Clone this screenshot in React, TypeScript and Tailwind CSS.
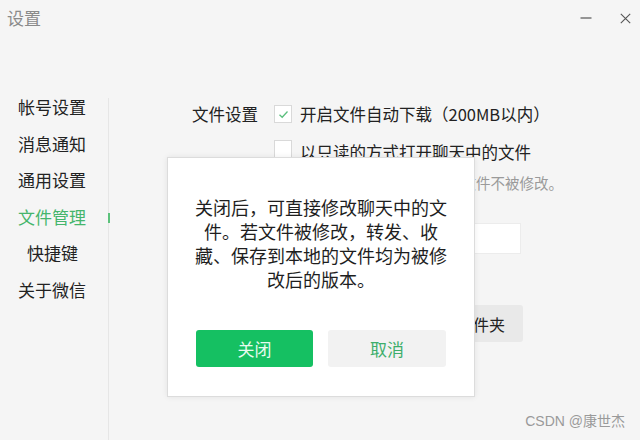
import React from "react";

const font = { fontFamily: '"Noto Sans CJK SC", "Microsoft YaHei", sans-serif' };

function Check({ checked }: { checked?: boolean }) {
  return (
    <div className="w-[18px] h-[18px] border border-[#d9d9d9] bg-white flex items-center justify-center shrink-0">
      {checked && (
        <svg width="11" height="9" viewBox="0 0 11 9">
          <path d="M1.5 4.8 L4.2 7.3 L9.5 1.5" fill="none" stroke="#5cbf7e" strokeWidth="1.3" />
        </svg>
      )}
    </div>
  );
}

export default function App() {
  const items = ["帐号设置", "消息通知", "通用设置", "文件管理", "快捷键", "关于微信"];
  return (
    <div className="relative w-[640px] h-[440px] bg-[#f5f5f5] overflow-hidden text-[#222]" style={font}>
      {/* title bar */}
      <div className="h-[36px] flex items-center pl-[7px] pr-[9px]">
        <span className="text-[17px] leading-[18px] text-[#8a8a8a]">设置</span>
        <div className="ml-auto flex items-center gap-[28px]">
          <svg width="12" height="12" viewBox="0 0 12 12">
            <path d="M0.5 6 H11.5" stroke="#555" strokeWidth="1.2" />
          </svg>
          <svg width="11" height="11" viewBox="0 0 11 11">
            <path d="M0.8 0.8 L10.2 10.2 M10.2 0.8 L0.8 10.2" stroke="#555" strokeWidth="1.1" />
          </svg>
        </div>
      </div>

      <div className="flex">
        {/* sidebar */}
        <div className="w-[108px] pt-[53px]">
          {items.map((t, i) => (
            <div
              key={t}
              className={
                "h-[36.5px] flex items-center text-[17px] leading-[20px] " +
                (i === 4 ? "pl-[27px] " : "pl-[18px] ") +
                (i === 3 ? "text-[#45b56c]" : "text-[#222]")
              }
            >
              {t}
            </div>
          ))}
        </div>
        <div className="relative w-px mt-[62px] h-[342px] bg-[#e6e6e6]">
          <div className="absolute left-[-0.5px] top-[115px] w-[2px] h-[10px] bg-[#5cc27b]" />
        </div>

        {/* content */}
        <div className="pl-[83px] pt-[68px] flex flex-col">
          <div className="h-[20px] flex items-center">
            <span className="w-[82px] text-[16.5px] leading-[20px]">文件设置</span>
            <Check checked />
            <span className="ml-[8px] text-[16.5px] leading-[20px] whitespace-nowrap">开启文件自动下载（200MB以内）</span>
          </div>
          <div className="h-[20px] mt-[15px] flex items-center pl-[82px]">
            <Check />
            <span className="ml-[8px] text-[16.5px] leading-[20px] mt-[6px] whitespace-nowrap">以只读的方式打开聊天中的文件</span>
          </div>
          <div className="h-[20px] mt-[14px] w-[371px] flex items-center justify-end">
            <span className="text-[14.5px] leading-[20px] text-[#9a9a9a] whitespace-nowrap">开启后，从聊天中打开的文件不被修改。</span>
          </div>
          <div className="mt-[30px] flex items-center pl-[108px]">
            <div className="w-[221px] h-[31px] bg-white border border-[#ececec]" />
          </div>
          <div className="mt-[51px] flex items-center pl-[215px]">
            <div className="h-[37px] px-[18px] flex items-center bg-[#e9e9e9] rounded-[3px] text-[16px] whitespace-nowrap">打开文件夹</div>
          </div>
        </div>
      </div>

      {/* modal dialog */}
      <div className="absolute left-[167px] top-[157px] w-[308px] h-[240px] bg-white border border-[#dcdcdc] shadow-[0_0_6px_rgba(0,0,0,0.08)] flex flex-col">
        <div className="pt-[37px] px-[25px] text-center text-[18px] leading-[24px] text-[#1e1e1e]">
          关闭后，可直接修改聊天中的文件。若文件被修改，转发、收藏、保存到本地的文件均为被修改后的版本。
        </div>
        <div className="mt-auto mb-[29px] px-[28px] flex gap-[15px]">
          <div className="w-[117px] h-[37px] rounded-[3px] bg-[#15c062] flex items-center justify-center text-[17px] text-[#e6fbef]">
            关闭
          </div>
          <div className="w-[118px] h-[37px] rounded-[3px] bg-[#f2f2f2] flex items-center justify-center text-[17px] text-[#3dae6b]">
            取消
          </div>
        </div>
      </div>

      {/* watermark */}
      <div className="absolute right-[15px] bottom-[11px] text-[14px] leading-[16px] text-[#9a9a9a]" style={{ fontFamily: '"Liberation Sans", "Noto Sans CJK SC", sans-serif' }}>
        CSDN @康世杰
      </div>
    </div>
  );
}
